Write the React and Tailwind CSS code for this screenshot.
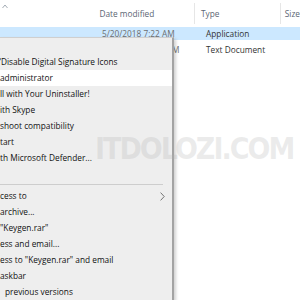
import React from "react";

const items = [
  { t: "", },
  { t: "\u201cDisable Digital Signature Icons", ml: "ml-[-2px]" },
  { t: "administrator", hl: true },
  { t: "ll with Your Uninstaller!" },
  { t: "ith Skype" },
  { t: "shoot compatibility" },
  { t: "tart" },
  { t: "th Microsoft Defender..." },
  { t: "" },
  { sep: true },
  { t: "cess to", sub: true },
  { t: "archive..." },
  { t: "\"Keygen.rar\"" },
  { t: "ess and email..." },
  { t: "ess to \"Keygen.rar\" and email" },
  { t: "askbar" },
  { t: "previous versions", ml: "ml-[5px]" },
];

export default function App() {
  return (
    <div className="relative w-[300px] h-[300px] overflow-hidden bg-white font-['Open_Sans','Noto_Sans',sans-serif] text-[8.3px] leading-none">
      {/* header */}
      <div className="flex h-[27px] text-[#5b6573]">
        <div className="w-[100px] pt-[4px] pl-[2px]">
          <svg width="6" height="5" viewBox="0 0 6 5">
            <polyline points="0.5,4 3,1 5.5,4" fill="none" stroke="#9aa3ad" strokeWidth="0.9" />
          </svg>
        </div>
        <div className="w-[100px] pl-[2px] pt-[1px] flex items-center border-r border-[#e6e6e6] my-[3px]">Date modified</div>
        <div className="w-[88px] pl-[6px] pt-[1px] flex items-center border-r border-[#e6e6e6] my-[3px]">Type</div>
        <div className="pl-[4px] pt-[1px] flex items-center">Size</div>
      </div>
      {/* rows */}
      <div className="flex h-[13px] bg-[#cce8ff] items-center pt-[1px]">
        <div className="w-[102px]" />
        <div className="w-[104px] text-[#6d6d6d]">5/20/2018 7:22 AM</div>
        <div className="text-[#333]">Application</div>
      </div>
      <div className="flex h-[20px] items-center">
        <div className="w-[102px]" />
        <div className="w-[104px] text-[#6d6d6d]">5/20/2018 10:12 AM</div>
        <div className="text-[#333]">Text Document</div>
      </div>

      {/* watermark */}
      <div className="absolute left-[95px] top-[134px] z-20 font-['DejaVu_Sans_Condensed','DejaVu_Sans',sans-serif] font-bold text-[30px] tracking-[-2px] text-[rgba(175,175,175,0.25)] pointer-events-none whitespace-nowrap">
        ITDOLOZI.COM
      </div>

      {/* context menu */}
      <div className="absolute left-0 top-[37px] w-[174px] h-[263px] z-10 bg-[#eeeeee] border-t border-[#cfcfcf] border-r-2 border-r-[#a3a3a3] shadow-[2px_2px_3px_rgba(0,0,0,0.18)] text-[#111]">
        {items.map((it, i) =>
          it.sep ? (
            <div key={i} className="h-[6px] pt-[2px]">
              <div className="h-px w-[163px] bg-[#cdcdcd]" />
            </div>
          ) : (
            <div
              key={i}
              className={`h-[16px] flex items-center justify-between pr-[7px] ${it.hl ? "bg-white" : ""}`}
            >
              <span className={`whitespace-nowrap ${it.ml || ""}`}>{it.t}</span>
              {it.sub && (
                <svg width="5" height="9" viewBox="0 0 5 9">
                  <polyline points="0.6,0.6 4.2,4.5 0.6,8.4" fill="none" stroke="#666" strokeWidth="0.9" />
                </svg>
              )}
            </div>
          )
        )}
      </div>
    </div>
  );
}
